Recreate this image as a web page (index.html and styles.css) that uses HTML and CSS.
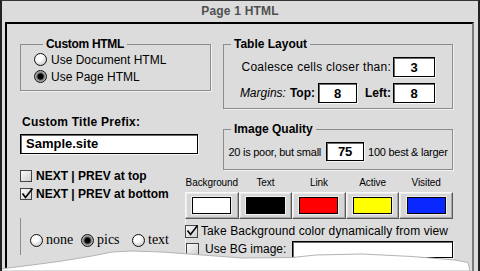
FILE: index.html
```html
<!DOCTYPE html>
<html>
<head>
<meta charset="utf-8">
<link rel="stylesheet" href="styles.css">
</head>
<body>
<div class="window">
  <div class="titlebar">Page 1 HTML</div>
  <div class="panel">
    <div class="grid">
      <fieldset class="group g-custom">
        <legend>Custom HTML</legend>
        <div class="opt"><span class="radio"></span>Use Document HTML</div>
        <div class="opt"><span class="radio on"></span>Use Page HTML</div>
      </fieldset>

      <fieldset class="group g-table">
        <legend>Table Layout</legend>
        <div class="trow"><span class="wide">Coalesce cells closer than:</span><span class="field num w42">3</span></div>
        <div class="trow r2"><i>Margins:</i><b class="k1">Top:</b><span class="field num w39">8</span><b class="k2">Left:</b><span class="field num w42">8</span></div>
      </fieldset>

      <div class="prefix">
        <div class="plabel">Custom Title Prefix:</div>
        <div class="field ptext">Sample.site</div>
      </div>

      <fieldset class="group g-quality">
        <legend>Image Quality</legend>
        <div class="qrow"><span>20 is poor, but small</span><span class="field num w38">75</span><span>100 best &amp; larger</span></div>
      </fieldset>

      <div class="leftbottom">
        <div class="crow bold"><span class="check"></span>NEXT | PREV at top</div>
        <div class="crow bold"><span class="check"><svg class="tick" width="14" height="14" viewBox="0 0 14 14"><path d="M2.5 6.5 L5.5 10.5 L12.5 1.5" fill="none" stroke="#000" stroke-width="1.6"/></svg></span>NEXT | PREV at bottom</div>
        <div class="navgroup">
          <span class="nav"><span class="radio"></span>none</span>
          <span class="nav"><span class="radio on"></span>pics</span>
          <span class="nav"><span class="radio"></span>text</span>
        </div>
      </div>

      <div class="colors">
        <div class="swatches">
          <span class="slabel">Background</span>
          <span class="slabel">Text</span>
          <span class="slabel">Link</span>
          <span class="slabel">Active</span>
          <span class="slabel">Visited</span>
          <span class="cbtn"><span class="sw white"></span></span>
          <span class="cbtn"><span class="sw black"></span></span>
          <span class="cbtn"><span class="sw red"></span></span>
          <span class="cbtn"><span class="sw yellow"></span></span>
          <span class="cbtn"><span class="sw blue"></span></span>
        </div>
        <div class="crow2 r1"><span class="check"><svg class="tick" width="14" height="14" viewBox="0 0 14 14"><path d="M2.5 6.5 L5.5 10.5 L12.5 1.5" fill="none" stroke="#000" stroke-width="1.6"/></svg></span>Take Background color dynamically from view</div>
        <div class="crow2 r2b"><span class="check"></span><span class="bglabel">Use BG image:</span><span class="field bgfield"></span></div>
      </div>
    </div>
  </div>
  <svg class="torn" width="482" height="26" viewBox="0 0 482 26">
    <polygon points="0,24 32,20 62,16 92,11 112,7 132,6 162,7 202,10 242,13 292,12.5 316,10 362,9 412,11.5 455,15 468,17.5 470,26 0,26" fill="#ffffff" stroke="#b4b4b4" stroke-width="1"/>
  </svg>
</div>
</body>
</html>
```

FILE: styles.css
```css
body {
  margin: 0;
  background: #dcdcdc;
  font-family: "Liberation Sans", Arial, sans-serif;
  font-size: 12px;
  color: #000;
}

.window {
  position: relative;
  width: 480px;
  height: 271px;
  box-sizing: border-box;
  border-top: 1px solid #333;
  border-left: 2px solid #222;
  border-right: 2px solid #222;
  overflow: hidden;
  background: #dcdcdc;
}

.titlebar {
  height: 21px;
  line-height: 21px;
  text-align: center;
  font-weight: bold;
  font-size: 12px;
  color: #505050;
  letter-spacing: 0.2px;
}

.panel {
  margin: 0 4px 0 3px;
  border-top: 2px solid #000;
  border-left: 2px solid #000;
  border-right: 2px solid #7a7a7a;
  padding: 13px 0 0 13px;
  height: 300px;
}

.grid {
  display: grid;
  grid-template-columns: 165px 26px 12px 230px;
  align-items: start;
}

fieldset.group {
  margin: 0;
  padding: 0;
  min-width: 0;
  border: 1px solid #8c8c8c;
  box-shadow: 1px 1px 0 #f2f2f2;
}

legend {
  padding: 0 3px;
  margin-left: 9px;
  font-weight: bold;
  font-size: 12px;
  line-height: 14px;
}

.g-custom {
  grid-column: 1 / 3;
  padding: 0 0 5px 13px !important;
}

.g-custom legend {
  letter-spacing: -0.3px;
}

.opt {
  display: flex;
  align-items: center;
  gap: 4px;
  height: 17px;
}

.radio {
  flex: none;
  width: 13px;
  height: 13px;
  box-sizing: border-box;
  border-radius: 50%;
  border: 1px solid #111;
  background: radial-gradient(circle at 38% 32%, #ffffff 0 30%, #d0d0d0 75%, #9a9a9a 100%);
}

.radio.on {
  background: radial-gradient(circle at 50% 50%, #000 0 2.6px, #4a4a4a 3.2px, #9c9c9c 4.4px, #dedede 100%);
}

.g-table {
  grid-column: 4;
  padding: 0 17px 5px 0 !important;
}

.g-table legend,
.g-quality legend {
  margin-left: 7px;
}

.trow {
  display: flex;
  align-items: center;
  justify-content: flex-end;
  height: 20px;
  margin-top: 6px;
}

.wide {
  letter-spacing: 0.25px;
  margin-right: 2px;
}

.trow i {
  margin-right: 4px;
}

.k1 {
  margin-right: 3px;
}

.k2 {
  margin: 0 2px 0 8px;
}

.field {
  background: #fff;
  border: 1px solid #000;
  box-shadow: inset 1px 1px 0 #6a6a6a, 1px 1px 0 #f6f6f6;
  box-sizing: border-box;
}

.num {
  display: flex;
  align-items: center;
  justify-content: center;
  height: 20px;
  font-weight: bold;
  font-size: 13px;
}

.w42 { width: 42px; }
.w39 { width: 39px; }
.w38 { width: 38px; height: 19px; }

.prefix {
  grid-column: 1 / 3;
  margin-top: 6px;
}

.plabel {
  font-weight: bold;
  line-height: 14px;
  padding-left: 2px;
  letter-spacing: 0.25px;
}

.ptext {
  margin-top: 5px;
  width: 178px;
  height: 20px;
  padding-left: 5px;
  font-weight: bold;
  font-size: 13px;
  line-height: 18px;
}

.g-quality {
  grid-column: 4;
  margin-top: 13px !important;
  padding: 0 0 8px 0 !important;
}

.qrow {
  display: flex;
  align-items: center;
  justify-content: center;
  margin-top: 6px;
  height: 19px;
  font-size: 11px;
  letter-spacing: -0.25px;
  gap: 4px;
}

.qrow .field {
  margin-left: 1px;
}

.leftbottom {
  grid-column: 1;
  margin-top: -3px;
}

.crow {
  display: flex;
  align-items: center;
  gap: 4px;
  height: 18px;
}

.bold {
  font-weight: bold;
}

.check {
  position: relative;
  flex: none;
  width: 12px;
  height: 12px;
  box-sizing: border-box;
  border: 1px solid #444;
  background: linear-gradient(135deg, #fafafa, #cfcfcf);
}

.tick {
  position: absolute;
  left: -1px;
  top: -2px;
  overflow: visible;
}

.navgroup {
  margin-top: 15px;
  height: 37px;
  border-left: 1px solid #8c8c8c;
  box-shadow: 1px 0 0 #f2f2f2;
  padding: 13px 0 0 9px;
  box-sizing: border-box;
  display: flex;
}

.nav {
  display: inline-flex;
  align-items: center;
  gap: 3px;
  width: 51px;
  height: 18px;
  font-family: "Liberation Serif", "Times New Roman", serif;
  font-size: 14px;
}

.colors {
  grid-column: 2 / 5;
}

.swatches {
  display: grid;
  grid-template-columns: repeat(5, 1fr);
  margin-top: 6px;
}

.slabel {
  text-align: center;
  font-size: 10px;
  line-height: 14px;
  letter-spacing: -0.1px;
}

.cbtn {
  margin-top: 2px;
  height: 27px;
  box-sizing: border-box;
  border: 1px solid;
  border-color: #f8f8f8 #5a5a5a #5a5a5a #f8f8f8;
  box-shadow: inset -1px -1px 0 #a8a8a8, inset 1px 1px 0 #ececec;
  background: #d6d6d6;
  display: flex;
  align-items: center;
  justify-content: center;
}

.sw {
  width: 39px;
  height: 17px;
  box-sizing: border-box;
  border: 1px solid #000;
  box-shadow: 0 0 0 1px #efefef;
}

.white { background: #ffffff; }
.black { background: #000000; }
.red { background: #ff0000; }
.yellow { background: #ffff00; }
.blue { background: #0828ff; }

.crow2 {
  display: flex;
  align-items: center;
  height: 18px;
  white-space: nowrap;
}

.crow2.r1 {
  margin-top: 3px;
  gap: 3px;
  letter-spacing: 0.1px;
}

.crow2.r1 .check {
  width: 13px;
  height: 13px;
}

.crow2.r2b .check {
  width: 13px;
  height: 13px;
  margin-left: 1px;
}

.bglabel {
  margin-left: 6px;
}

.bgfield {
  margin-left: 6px;
  flex: 1;
  height: 17px;
}

.torn {
  position: absolute;
  left: -2px;
  bottom: 0;
}
```
